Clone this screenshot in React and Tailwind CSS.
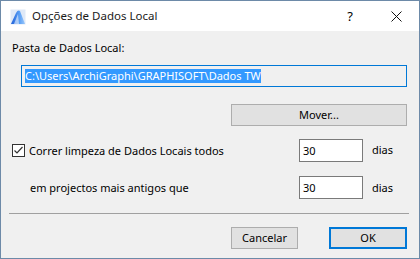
import React from 'react';

function AppIcon() {
  return (
    <svg width="16" height="16" viewBox="0 0 16 16">
      <defs>
        <linearGradient id="ac" x1="0" y1="0" x2="1" y2="0">
          <stop offset="0" stopColor="#1f5fd8" />
          <stop offset="0.6" stopColor="#5aa0f5" />
          <stop offset="1" stopColor="#9cc8fb" />
        </linearGradient>
      </defs>
      <rect x="0.5" y="0.5" width="15" height="15" fill="#dfe9f7" />
      <path d="M1 15 L6 4 Q8 0.5 10 2 L15 15 Z" fill="url(#ac)" />
      <path d="M4 15 L8 5 L9 15 Z" fill="#ffffff" opacity="0.55" />
    </svg>
  );
}

export default function App() {
  return (
    <div className="w-[420px] h-[259px] border border-[#6d8aa8] bg-[#f0f0f0] flex flex-col text-[11px] text-black font-['Noto_Sans','Open_Sans',sans-serif] leading-[16px] overflow-hidden">
      {/* title bar */}
      <div className="h-[30px] bg-white flex items-center shrink-0">
        <div className="ml-[9px] mt-[1px]">
          <AppIcon />
        </div>
        <span className="ml-[6px] text-[11.5px] text-[#1a1a1a]">Opções de Dados Local</span>
        <span className="ml-auto w-[46px] text-center text-[13px]">?</span>
        <div className="w-[46px] flex justify-center">
          <svg width="11" height="11" viewBox="0 0 11 11">
            <path d="M0.5 0.5 L10.5 10.5 M10.5 0.5 L0.5 10.5" stroke="#111" strokeWidth="1" />
          </svg>
        </div>
      </div>

      {/* body */}
      <div className="flex flex-col">
        <div className="mt-[9px] ml-[11px]">Pasta de Dados Local:</div>

        <div className="mt-[9px] ml-[20px] w-[386px] h-[22px] border border-[#0078d7] bg-[#f0f0f0] flex items-center px-[3px]">
          <span className="bg-[#3399ff] text-white leading-[14px]">C:\Users\ArchiGraphi\GRAPHISOFT\Dados TW</span>
        </div>

        <div className="mt-[17px] ml-[230px] w-[176px] h-[22px] bg-[#e1e1e1] border border-[#adadad] flex items-center justify-center">
          Mover...
        </div>

        <div className="mt-[13px] flex items-center h-[23px]">
          <div className="ml-[11px] w-[13px] h-[13px] border border-[#333] bg-white flex items-center justify-center">
            <svg width="11" height="11" viewBox="0 0 11 11">
              <path d="M1.5 5.5 L4 8 L9.5 2" fill="none" stroke="#333" strokeWidth="1.2" />
            </svg>
          </div>
          <span className="ml-[4px]">Correr limpeza de Dados Locais todos</span>
          <div className="ml-auto w-[64px] h-[23px] border border-[#7a7a7a] bg-white flex items-center px-[3px]">30</div>
          <span className="ml-[9px] w-[47px] -mt-[2px]">dias</span>
        </div>

        <div className="mt-[14px] flex items-center h-[23px]">
          <span className="ml-[29px]">em projectos mais antigos que</span>
          <div className="ml-auto w-[64px] h-[23px] border border-[#7a7a7a] bg-white flex items-center px-[3px]">30</div>
          <span className="ml-[9px] w-[47px]">dias</span>
        </div>

        <div className="mt-[14px] ml-[8px] w-[400px] h-px bg-[#a0a0a0]" />

        <div className="mt-[13px] flex items-center">
          <div className="ml-[230px] w-[67px] h-[22px] bg-[#e1e1e1] border border-[#adadad] flex items-center justify-center">
            Cancelar
          </div>
          <div className="ml-[31px] w-[78px] h-[22px] bg-[#e1e1e1] border-2 border-[#0078d7] flex items-center justify-center">
            OK
          </div>
        </div>
      </div>
    </div>
  );
}
